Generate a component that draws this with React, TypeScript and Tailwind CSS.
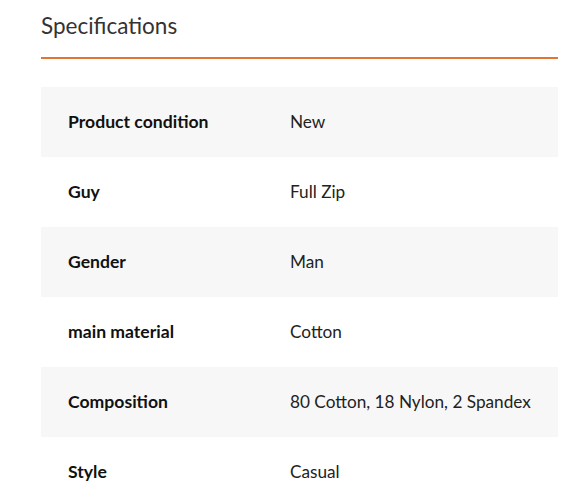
const SPECS: [string, string][] = [
  ["Product condition", "New"],
  ["Guy", "Full Zip"],
  ["Gender", "Man"],
  ["main material", "Cotton"],
  ["Composition", "80 Cotton, 18 Nylon, 2 Spandex"],
  ["Style", "Casual"],
];

export default function App() {
  return (
    <div className="min-h-screen bg-white font-['Lato',sans-serif] text-[#222]">
      <div className="ml-[41px] w-[517px] pt-[12px]">
        <h2 className="text-[22.5px] leading-[28px] text-[#333]">Specifications</h2>
        <div className="mt-[17px] h-[2px] bg-[#e0762f]" />
        <div className="mt-[28px]">
          {SPECS.map(([label, value], i) => (
            <div
              key={label}
              className={`flex h-[70px] items-center ${i % 2 === 0 ? "bg-[#f7f7f7]" : "bg-white"}`}
            >
              <div className="w-[249px] pl-[27px] text-[17.6px] font-bold text-[#111]">{label}</div>
              <div className="text-[17.2px] text-[#222]">{value}</div>
            </div>
          ))}
        </div>
      </div>
    </div>
  );
}
